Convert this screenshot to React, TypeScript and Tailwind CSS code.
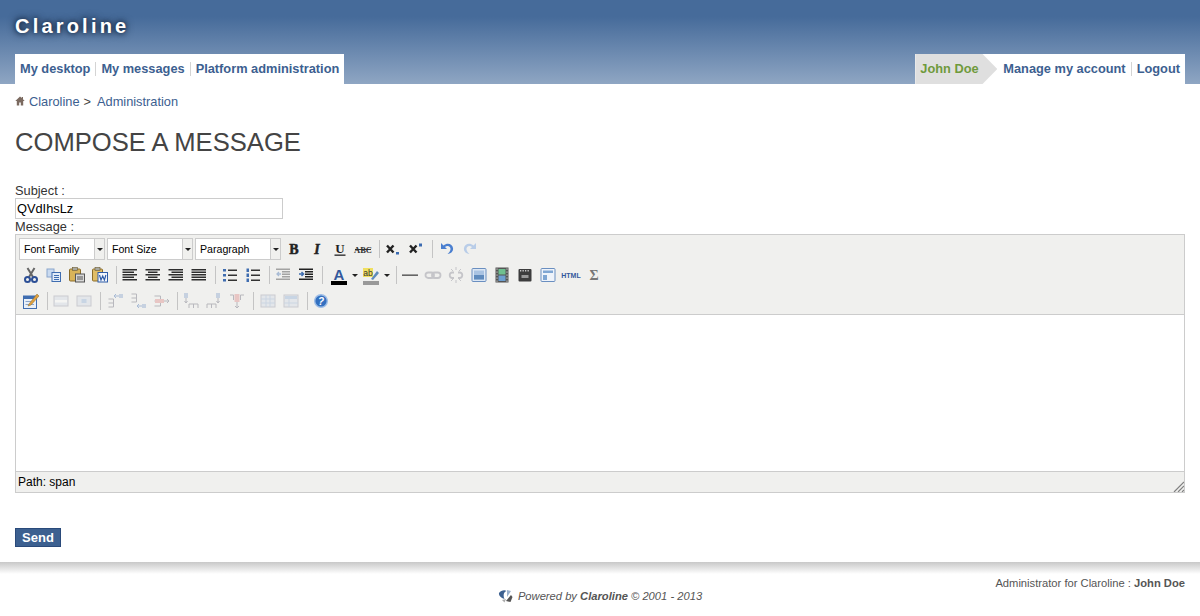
import type { ReactNode } from 'react'

const lines = (rows: [number, number, number][], color: string, h = 1.5) =>
  rows.map(([x1, x2, y], i) => <rect key={i} x={x1} y={y} width={x2 - x1} height={h} fill={color} />)

const icons: Record<string, ReactNode> = {
  bold: <text x="10" y="15" textAnchor="middle" fontSize="14" fontWeight="700" stroke="#222" strokeWidth=".5" fontFamily="Liberation Serif, serif" fill="#222">B</text>,
  italic: <text x="10" y="15" textAnchor="middle" fontSize="14" fontWeight="700" fontStyle="italic" stroke="#222" strokeWidth=".5" fontFamily="Liberation Serif, serif" fill="#222">I</text>,
  underline: (
    <>
      <text x="10" y="14" textAnchor="middle" fontSize="13" fontWeight="700" fontFamily="Liberation Serif, serif" fill="#222">U</text>
      <rect x="4.500" y="15.500" width="11" height="1.300" fill="#222" />
    </>
  ),
  strike: (
    <>
      <text x="10" y="13.500" textAnchor="middle" fontSize="8.500" fontWeight="700" fontFamily="Liberation Serif, serif" fill="#333">ABC</text>
      <rect x="2" y="10" width="16" height="1" fill="#333" />
    </>
  ),
  sub: (
    <>
      <path d="M4 6.500l6.500 7M10.500 6.500l-6.500 7" stroke="#222" strokeWidth="2.400" fill="none" />
      <rect x="13" y="13" width="3" height="2.500" fill="#3a6ab0" />
    </>
  ),
  sup: (
    <>
      <path d="M4 6.500l6.500 7M10.500 6.500l-6.500 7" stroke="#222" strokeWidth="2.400" fill="none" />
      <rect x="13" y="4.500" width="3" height="3" fill="#3a6ab0" />
    </>
  ),
  undo: <path d="M4 4v6h6L8 8c2.500-2 6-.5 5.500 2.500-.3 2-1.500 3-3 4.500 4-.5 6-3 5.500-6C15.500 5 10.500 3 6.500 6.500z" fill="#4a7fd0" />,
  redo: <path d="M16 4v6h-6l2-2c-2.500-2-6-.5-5.500 2.500.3 2 1.500 3 3 4.500-4-.5-6-3-5.500-6C4.500 5 9.500 3 13.500 6.500z" fill="#b9cde8" />,
  cut: (
    <>
      <path d="M6.500 3l5.500 9M13.500 3l-5.500 9" stroke="#666" strokeWidth="2" fill="none" />
      <circle cx="6.500" cy="14.500" r="2.500" fill="none" stroke="#2c4f96" strokeWidth="2" />
      <circle cx="13.500" cy="14.500" r="2.500" fill="none" stroke="#2c4f96" strokeWidth="2" />
    </>
  ),
  copy: (
    <>
      <rect x="3" y="4" width="7" height="8" fill="#c9daf0" stroke="#8aa5cc" />
      <rect x="8" y="7.500" width="8.500" height="9" fill="#e2ecf8" stroke="#3f6db0" />
      {lines([[10, 15, 10], [10, 15, 12], [10, 15, 14]], '#3f6db0', 1)}
    </>
  ),
  paste: (
    <>
      <rect x="2.500" y="4" width="11" height="12" rx="1" fill="#d9b45a" stroke="#8b6c28" />
      <rect x="5.500" y="2.500" width="5" height="3" fill="#a8a8a0" stroke="#6b5a30" strokeWidth=".6" />
      <rect x="8.500" y="9" width="9" height="8" fill="#d8d8d8" stroke="#555" />
      {lines([[10, 16, 11.500], [10, 16, 13.500]], '#555', 1)}
    </>
  ),
  word: (
    <>
      <rect x="2.500" y="4" width="10" height="12" rx="1" fill="#e0bd66" stroke="#8b6c28" />
      <rect x="5" y="2.500" width="5" height="3" fill="#a8a8a0" stroke="#6b5a30" strokeWidth=".6" />
      <rect x="8" y="7.500" width="9.500" height="9.500" fill="#f4f7fc" stroke="#2f5ca8" />
      <path d="M9.500 10l1.500 5 1.700-4 1.700 4 1.500-5" stroke="#2f5ca8" strokeWidth="1.200" fill="none" />
    </>
  ),
  left: <>{lines([[2.500, 17, 4], [2.500, 14, 6.500], [2.500, 17, 9], [2.500, 14, 11.500], [2.500, 17, 14]], '#2e2e2e')}</>,
  center: <>{lines([[2.500, 17, 4], [5, 14.500, 6.500], [2.500, 17, 9], [5, 14.500, 11.500], [2.500, 17, 14]], '#2e2e2e')}</>,
  right: <>{lines([[2.500, 17, 4], [5.500, 17, 6.500], [2.500, 17, 9], [5.500, 17, 11.500], [2.500, 17, 14]], '#2e2e2e')}</>,
  full: <>{lines([[2.500, 17, 4], [2.500, 17, 6.500], [2.500, 17, 9], [2.500, 17, 11.500], [2.500, 17, 14]], '#2e2e2e')}</>,
  ul: (
    <>
      {[4, 9, 14].map(y => <rect key={y} x="3" y={y} width="3" height="2.500" fill="#3f6db0" />)}
      {lines([[8, 17, 4.500], [8, 17, 9.500], [8, 17, 14.500]], '#333')}
    </>
  ),
  ol: (
    <>
      {[3.500, 8.500, 13.500].map(y => <rect key={y} x="3.500" y={y} width="2.500" height="3.500" fill="#3f6db0" />)}
      {lines([[8, 17, 4.500], [8, 17, 9.500], [8, 17, 14.500]], '#333')}
    </>
  ),
  outdent: (
    <g opacity=".4">
      {lines([[3, 17, 3.500], [9, 17, 6], [9, 17, 8.500], [9, 17, 11], [3, 17, 13.500]], '#333')}
      <path d="M8 9H4M6 7L4 9l2 2" stroke="#3f6db0" strokeWidth="1.300" fill="none" />
    </g>
  ),
  indent: (
    <>
      {lines([[3, 17, 3.500], [9, 17, 6], [9, 17, 8.500], [9, 17, 11], [3, 17, 13.500]], '#222')}
      <path d="M3 9h4M5.500 7L7.500 9l-2 2" stroke="#3f6db0" strokeWidth="1.500" fill="none" />
    </>
  ),
  hr: <rect x="2" y="9.500" width="16" height="1.300" fill="#444" />,
  link: (
    <g opacity=".3" fill="none" stroke="#667">
      <rect x="2.500" y="7.500" width="8.500" height="5.500" rx="2.700" strokeWidth="1.800" />
      <rect x="9" y="7.500" width="8.500" height="5.500" rx="2.700" strokeWidth="1.800" />
    </g>
  ),
  unlink: (
    <g opacity=".3" fill="none" stroke="#667" strokeWidth="1.800">
      <path d="M8 7.500H6a2.800 2.800 0 000 5.500h2M12 7.500h2a2.800 2.800 0 010 5.500h-2" />
      <path d="M10 2v3M10 15v3M5 4l2 2M15 4l-2 2M5 16l2-2M15 16l-2-2" strokeWidth="1" />
    </g>
  ),
  image: (
    <>
      <rect x="3" y="3.500" width="14" height="13" rx="1" fill="#dce7f4" stroke="#6a8fc0" />
      <rect x="5" y="5.500" width="10" height="9" fill="#a9c3e2" />
      <rect x="5" y="10" width="10" height="4.500" fill="#5f8bbd" />
    </>
  ),
  media: (
    <>
      <rect x="3.500" y="2.500" width="13" height="15" fill="#555" />
      <rect x="6.500" y="4" width="7" height="5.500" fill="#6fbf8f" />
      <rect x="6.500" y="10.500" width="7" height="5.500" fill="#6d9fd0" />
      {[4, 7, 10, 13, 16].map(y => <rect key={y} x="4.500" y={y - 0.5} width="1" height="1.200" fill="#ddd" />)}
      {[4, 7, 10, 13, 16].map(y => <rect key={y} x="14.500" y={y - 0.5} width="1" height="1.200" fill="#ddd" />)}
    </>
  ),
  film: (
    <>
      <rect x="3.500" y="4" width="13" height="12.500" rx="1" fill="#3d3d3d" />
      {[5, 7.500, 10, 12.500].map(x => <rect key={x} x={x} y="5" width="1.300" height="1.500" fill="#ccc" />)}
      <rect x="6.500" y="10" width="7" height="3" fill="#999" />
    </>
  ),
  template: (
    <>
      <rect x="3" y="3.500" width="14" height="13" rx="1" fill="#eef3fa" stroke="#6a8fc0" />
      <rect x="5" y="5.500" width="10" height="2.500" fill="#7fa6d3" />
      <rect x="5" y="10" width="4" height="5" fill="#7fa6d3" />
    </>
  ),
  html: <text x="10" y="13" textAnchor="middle" fontSize="7" fontWeight="700" fontFamily="Liberation Sans, sans-serif" fill="#33589c">HTML</text>,
  sigma: <text x="10" y="15" textAnchor="middle" fontSize="14" fontWeight="700" fontFamily="Liberation Serif, serif" fill="#777">Σ</text>,
  edit: (
    <>
      <rect x="2.500" y="5" width="13" height="12.500" fill="#eaf0f8" stroke="#3f6db0" />
      <rect x="2.500" y="5" width="13" height="3" fill="#3f6db0" />
      {lines([[4.500, 13, 10], [4.500, 13, 13]], '#8aa5cc', 1)}
      <path d="M8 13l8-10 2 2-8 9-3 1z" fill="#e0a040" stroke="#8b6c28" strokeWidth=".5" />
    </>
  ),
  rowProps: (
    <g opacity=".35">
      <rect x="3" y="5" width="14" height="10" fill="#ccd6e4" stroke="#889" />
      <rect x="4" y="9" width="12" height="2.500" fill="#fff" />
    </g>
  ),
  cellProps: (
    <g opacity=".35">
      <rect x="3" y="5" width="14" height="10" fill="#ccd6e4" stroke="#889" />
      <rect x="7.500" y="8" width="5" height="4" fill="#7fa6d3" />
    </g>
  ),
  rowBefore: (
    <g opacity=".4" fill="none" stroke="#667">
      <path d="M3.500 8h5v8h-5M3.500 12h5" />
      <path d="M14 5H9M11 3L9 5l2 2" stroke="#3f6db0" />
      <rect x="14" y="3" width="4" height="4" fill="#8aa5cc" stroke="none" />
    </g>
  ),
  rowAfter: (
    <g opacity=".4" fill="none" stroke="#667">
      <path d="M3.500 3h5v8h-5M3.500 7h5" />
      <path d="M14 15H9M11 13l-2 2 2 2" stroke="#3f6db0" />
      <rect x="14" y="13" width="4" height="4" fill="#8aa5cc" stroke="none" />
    </g>
  ),
  rowDel: (
    <g opacity=".4" fill="none" stroke="#667">
      <path d="M3.500 5h6v10h-6M3.500 10h6" />
      <rect x="4" y="8" width="9" height="4" fill="#d88" stroke="none" />
      <path d="M13 10h5M16 8l2 2-2 2" />
    </g>
  ),
  colBefore: (
    <g opacity=".4" fill="none" stroke="#667">
      <rect x="3" y="2" width="4" height="5" fill="#8aa5cc" stroke="none" />
      <path d="M5 7v5M3.500 10l1.500 2 1.500-2" />
      <path d="M8 17v-4h9v4M12.500 13v4" />
    </g>
  ),
  colAfter: (
    <g opacity=".4" fill="none" stroke="#667">
      <rect x="12" y="2" width="4" height="5" fill="#8aa5cc" stroke="none" />
      <path d="M14 7v5M12.500 10l1.500 2 1.500-2" />
      <path d="M3 17v-4h9v4M7.500 13v4" />
    </g>
  ),
  colDel: (
    <g opacity=".4" fill="none" stroke="#667">
      <path d="M3 4h3.500v5M17 4h-3.500v5" />
      <rect x="7.500" y="3" width="5" height="8" fill="#d88" stroke="none" />
      <path d="M10 11v6M8 15l2 2 2-2" />
    </g>
  ),
  split: (
    <g opacity=".35">
      <rect x="3" y="4" width="14" height="12" fill="#ccd6e4" stroke="#889" />
      <path d="M3 8h14M3 12h14M8 4v12M12 4v12" stroke="#8aa5cc" />
    </g>
  ),
  merge: (
    <g opacity=".35">
      <rect x="3" y="4" width="14" height="12" fill="#ccd6e4" stroke="#889" />
      <rect x="4" y="5" width="12" height="3" fill="#7fa6d3" />
      <path d="M3 12h14M8 8v8" stroke="#8aa5cc" />
    </g>
  ),
  help: (
    <>
      <circle cx="10" cy="10" r="6.300" fill="#3370c0" stroke="#9dbde6" strokeWidth="1.400" />
      <text x="10" y="13.500" textAnchor="middle" fontSize="10" fontWeight="700" fontStyle="italic" fontFamily="Liberation Sans, sans-serif" fill="#fff">?</text>
    </>
  ),
}

function Btn({ name }: { name: string }) {
  return (
    <span className="w-[23px] h-[22px] flex items-center justify-center shrink-0">
      <svg width="20" height="20" viewBox="0 0 20 20">{icons[name]}</svg>
    </span>
  )
}

function Sep() {
  return (
    <span className="w-[7.5px] h-[22px] pr-[2px] flex justify-end items-center shrink-0">
      <span className="w-px h-[18px] bg-[#c4c4c4]" />
    </span>
  )
}

function ColorBtn({ children }: { children: ReactNode }) {
  return (
    <>
      <span className="w-[23px] h-[22px] flex items-center justify-center shrink-0">
        <svg width="20" height="20" viewBox="0 0 20 20">{children}</svg>
      </span>
      <span className="w-[9px] h-[22px] flex items-center justify-center shrink-0">
        <span className="border-x-[3px] border-x-transparent border-t-[3px] border-t-[#222]" />
      </span>
    </>
  )
}

function Select({ label }: { label: string }) {
  return (
    <span className="w-[86px] h-[22px] flex border border-[#cccccc] bg-white shrink-0">
      <span className="flex-1 pl-1 text-[10.6px] leading-[20px] text-black">{label}</span>
      <span className="w-[10px] bg-[#f0f0ee] border-l border-[#cccccc] flex items-center justify-center">
        <span className="border-x-[3px] border-x-transparent border-t-[3px] border-t-[#222]" />
      </span>
    </span>
  )
}

const Divider = () => <span className="w-px h-[14px] bg-[#d4d4d4] mx-[5px]" />

export default function App() {
  return (
    <div className="h-[616px] overflow-hidden bg-white font-['Liberation_Sans',Arial,sans-serif] text-[12.8px] text-[#333]">
      <header className="h-[84px] bg-gradient-to-b from-[#466b9a] from-20% to-[#8fa6c3]">
        <div className="h-[54px] px-[15px] pt-[13px]">
          <span className="text-[20px] leading-[27px] font-bold text-white tracking-[3.2px] [text-shadow:0_0_5px_#12233c,0_0_8px_#12233c]">Claroline</span>
        </div>
        <nav className="h-[30px] px-[15px] flex justify-between font-bold text-[#3c6090]">
          <div className="bg-white flex items-center px-[5px]">
            <span>My desktop</span>
            <Divider />
            <span>My messages</span>
            <Divider />
            <span>Platform administration</span>
          </div>
          <div className="bg-white flex items-center pr-[5px]">
            <span className="h-full w-[82px] pl-[5px] bg-[#dfdfdf] text-[#6f9a3c] flex items-center [clip-path:polygon(0_0,82%_0,100%_50%,82%_100%,0_100%)]">John Doe</span>
            <span className="ml-[6px]">Manage my account</span>
            <Divider />
            <span>Logout</span>
          </div>
        </nav>
      </header>

      <main className="px-[15px]">
        <div className="mt-[9px] h-[18px] flex items-center text-[#3c6090]">
          <svg width="10" height="10" viewBox="0 0 10 10" className="mr-1 -mt-[3px]">
            <path d="M5 .5L.3 5h1.500v4.500h2.400V6.500h1.600v3h2.400V5h1.500L8 3.200V1H6.800v1z" fill="#7b6a60" />
          </svg>
          <span>Claroline</span>
          <span className="text-[#444] ml-1 mr-[6px]">&gt;</span>
          <span>Administration</span>
        </div>
        <h1 className="mt-[16px] h-[30px] text-[25.6px] leading-[30px] text-[#444]">COMPOSE A MESSAGE</h1>
        <div className="mt-[26px] h-[15px] leading-[15px]">Subject :</div>
        <input
          readOnly
          value="QVdIhsLz"
          className="block w-[268px] h-[21px] border border-[#cccccc] px-[1px] text-[12.8px] text-black outline-none"
        />
        <div className="h-[15px] leading-[15px]">Message :</div>

        <div className="h-[259px] border border-[#cccccc] flex flex-col">
          <div className="h-[80px] bg-[#f0f0ee] border-b border-[#cccccc] pl-[3px] pt-[3px] flex flex-col gap-[4px]">
            <div className="flex items-center">
              <span className="flex gap-[2px] mr-[1px]">
                <Select label="Font Family" />
                <Select label="Font Size" />
                <Select label="Paragraph" />
              </span>
              <Btn name="bold" />
              <Btn name="italic" />
              <Btn name="underline" />
              <Btn name="strike" />
              <Sep />
              <Btn name="sub" />
              <Btn name="sup" />
              <Sep />
              <Btn name="undo" />
              <Btn name="redo" />
            </div>
            <div className="flex items-center">
              <Btn name="cut" />
              <Btn name="copy" />
              <Btn name="paste" />
              <Btn name="word" />
              <Sep />
              <Btn name="left" />
              <Btn name="center" />
              <Btn name="right" />
              <Btn name="full" />
              <Sep />
              <Btn name="ul" />
              <Btn name="ol" />
              <Sep />
              <Btn name="outdent" />
              <Btn name="indent" />
              <Sep />
              <span className="w-[2px] shrink-0" />
              <ColorBtn>
                <text x="10" y="15" textAnchor="middle" fontSize="15" fontWeight="700" fontFamily="Liberation Sans, sans-serif" fill="#33589c">A</text>
                <rect x="2" y="16" width="16" height="4" fill="#000" />
              </ColorBtn>
              <ColorBtn>
                <rect x="2" y="3" width="10" height="9" fill="#f0e060" />
                <text x="7" y="10.500" textAnchor="middle" fontSize="8.500" fontFamily="Liberation Sans, sans-serif" fill="#333">ab</text>
                <path d="M10 14l6-8 2 2-6 7z" fill="#5f8bbd" />
                <rect x="2" y="16" width="16" height="4" fill="#999" />
              </ColorBtn>
              <Sep />
              <Btn name="hr" />
              <Btn name="link" />
              <Btn name="unlink" />
              <Btn name="image" />
              <Btn name="media" />
              <Btn name="film" />
              <Btn name="template" />
              <Btn name="html" />
              <Btn name="sigma" />
            </div>
            <div className="flex items-center">
              <Btn name="edit" />
              <Sep />
              <Btn name="rowProps" />
              <Btn name="cellProps" />
              <Sep />
              <Btn name="rowBefore" />
              <Btn name="rowAfter" />
              <Btn name="rowDel" />
              <Sep />
              <Btn name="colBefore" />
              <Btn name="colAfter" />
              <Btn name="colDel" />
              <Sep />
              <Btn name="split" />
              <Btn name="merge" />
              <Sep />
              <Btn name="help" />
            </div>
          </div>
          <div className="flex-1 bg-white" />
          <div className="relative h-[21px] bg-[#f0f0ee] border-t border-[#cccccc] pl-[2px] text-[12px] leading-[20px] text-black">
            Path: span
            <svg width="11" height="11" viewBox="0 0 11 11" className="absolute right-0 bottom-0">
              <path d="M1 11L11 1M5 11l6-6M9 11l2-2" stroke="#808080" strokeWidth="1.200" fill="none" />
            </svg>
          </div>
        </div>

        <button className="mt-[35px] block w-[46px] h-[19px] bg-[#3c6090] border border-[#2a4a7a] text-white font-bold text-[13px] leading-[17px]">Send</button>
      </main>

      <footer className="mt-[15px] text-[11.2px] text-[#555]">
        <div className="h-[12px] bg-gradient-to-b from-[#c8c8c8] to-white" />
        <div className="px-[15px] h-[14px] mt-[2px] text-right leading-[14px]">
          Administrator for Claroline : <b>John Doe</b>
        </div>
        <div className="flex justify-center items-center h-[14px] -mt-[1px] italic">
          <svg width="15" height="14" viewBox="0 0 15 14" className="mr-[5px]">
            <path d="M1 4c2-3 6-3.500 7.500-2C5.500 3 5 6.500 6.500 10 3 9 .5 6.500 1 4z" fill="#3c6090" />
            <path d="M9 1l4 1-4 6z" fill="#9ab0cc" />
            <path d="M8 12l5-6 1.500 2-2 5z" fill="#555" />
            <path d="M4 11l4-1-1.500 3.500z" fill="#aaa" />
          </svg>
          <span>Powered by <b>Claroline</b> © 2001 - 2013</span>
        </div>
      </footer>
    </div>
  )
}
